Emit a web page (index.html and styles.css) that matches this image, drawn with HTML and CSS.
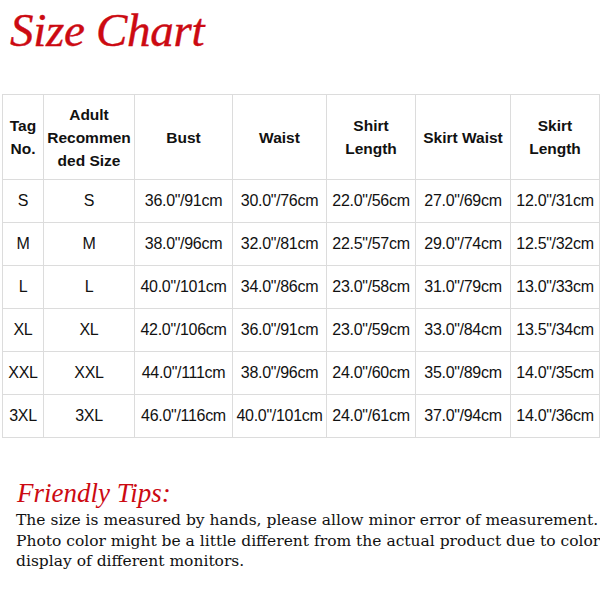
FILE: index.html
```html
<!DOCTYPE html>
<html>
<head>
<meta charset="utf-8">
<link rel="stylesheet" href="styles.css">
</head>
<body>
<div class="page">
  <h1 class="title">Size Chart</h1>
  <table class="chart">
    <colgroup>
      <col style="width:41px"><col style="width:91px"><col style="width:98px"><col style="width:94px"><col style="width:89px"><col style="width:95px"><col style="width:89px">
    </colgroup>
    <thead>
      <tr>
        <th>Tag<br>No.</th>
        <th>Adult<br>Recommen<br>ded Size</th>
        <th>Bust</th>
        <th>Waist</th>
        <th>Shirt<br>Length</th>
        <th>Skirt Waist</th>
        <th>Skirt<br>Length</th>
      </tr>
    </thead>
    <tbody>
      <tr><td>S</td><td>S</td><td>36.0"/91cm</td><td>30.0"/76cm</td><td>22.0"/56cm</td><td>27.0"/69cm</td><td>12.0"/31cm</td></tr>
      <tr><td>M</td><td>M</td><td>38.0"/96cm</td><td>32.0"/81cm</td><td>22.5"/57cm</td><td>29.0"/74cm</td><td>12.5"/32cm</td></tr>
      <tr><td>L</td><td>L</td><td>40.0"/101cm</td><td>34.0"/86cm</td><td>23.0"/58cm</td><td>31.0"/79cm</td><td>13.0"/33cm</td></tr>
      <tr><td>XL</td><td>XL</td><td>42.0"/106cm</td><td>36.0"/91cm</td><td>23.0"/59cm</td><td>33.0"/84cm</td><td>13.5"/34cm</td></tr>
      <tr><td>XXL</td><td>XXL</td><td>44.0"/111cm</td><td>38.0"/96cm</td><td>24.0"/60cm</td><td>35.0"/89cm</td><td>14.0"/35cm</td></tr>
      <tr><td>3XL</td><td>3XL</td><td>46.0"/116cm</td><td>40.0"/101cm</td><td>24.0"/61cm</td><td>37.0"/94cm</td><td>14.0"/36cm</td></tr>
    </tbody>
  </table>
  <div class="tips">
    <h2 class="tips-title">Friendly Tips:</h2>
    <p class="tips-text">The size is measured by hands, please allow minor error of measurement.<br>Photo color might be a little different from the actual product due to color<br>display of different monitors.</p>
  </div>
</div>
</body>
</html>
```
FILE: styles.css
```css
html, body {
  margin: 0;
  padding: 0;
  background: #fff;
}
.page {
  width: 600px;
  height: 600px;
  overflow: hidden;
}
.title {
  margin: 0;
  padding: 5px 0 0 10px;
  height: 89px;
  font-family: "Liberation Serif", serif;
  font-style: italic;
  font-weight: normal;
  font-size: 47px;
  line-height: 50px;
  color: #cc0a12;
  letter-spacing: -0.3px;
  -webkit-text-stroke: 0.4px #cc0a12;
}
.chart {
  margin-left: 2px;
  border-collapse: collapse;
  table-layout: fixed;
  width: 597px;
  font-family: "Liberation Sans", Arial, sans-serif;
  font-size: 15.5px;
  color: #111;
}
.chart th, .chart td {
  border: 1px solid #dcdcdc;
  text-align: center;
  vertical-align: middle;
  padding: 0;
  white-space: nowrap;
}
.chart th {
  height: 84px;
  font-weight: bold;
  line-height: 23px;
}
.chart td {
  height: 42px;
  line-height: 18px;
  font-size: 16px;
  letter-spacing: -0.3px;
}
.tips {
  padding: 40px 0 0 17px;
}
.tips-title {
  margin: 0;
  font-family: "Liberation Serif", serif;
  font-style: italic;
  font-weight: normal;
  font-size: 27px;
  line-height: 30px;
  color: #cc0a12;
}
.tips-text {
  margin: 2px 0 0 -1px;
  font-family: "DejaVu Serif", serif;
  font-size: 15.5px;
  line-height: 20.5px;
  color: #111;
  white-space: nowrap;
}
```
